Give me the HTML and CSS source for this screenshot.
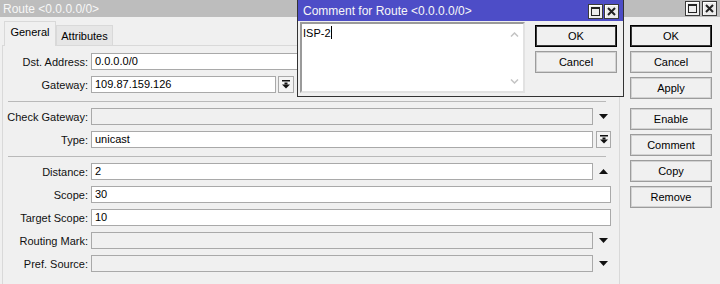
FILE: index.html
```html
<!DOCTYPE html>
<html>
<head>
    <title>Route &lt;0.0.0.0/0&gt;</title>
    <link rel="stylesheet" href="styles.css">
</head>
<body>
<div class="screen">

    <div class="window">
        <div class="titlebar">
            <span class="title">Route &lt;0.0.0.0/0&gt;</span>
            <div class="title-btns">
                <span class="tbtn"><svg width="9" height="9" viewBox="0 0 9 9"><rect x="0.5" y="0.5" width="8" height="8" fill="none" stroke="#222"/><rect x="0" y="0" width="9" height="2" fill="#222"/></svg></span>
                <span class="tbtn"><svg width="9" height="9" viewBox="0 0 9 9"><path d="M1 1 L8 8 M8 1 L1 8" stroke="#222" stroke-width="2"/></svg></span>
            </div>
        </div>

        <div class="window-body">
            <div class="tabs-area">
                <div class="tab-strip">
                    <div class="tab active">General</div>
                    <div class="tab">Attributes</div>
                </div>

                <div class="tab-panel">
                    <div class="row">
                        <label>Dst. Address:</label>
                        <div class="field">0.0.0.0/0</div>
                    </div>
                    <div class="row">
                        <label>Gateway:</label>
                        <div class="field gateway">109.87.159.126</div>
                        <div class="drop-btn gw-btn">
                            <svg width="8" height="9" viewBox="0 0 8 9"><rect x="0" y="0" width="8" height="1.5" fill="#111"/><rect x="2.5" y="2.5" width="3" height="2" fill="#111"/><path d="M0 4.5 L8 4.5 L4 8.5 Z" fill="#111"/></svg>
                        </div>
                    </div>

                    <div class="separator"></div>

                    <div class="row">
                        <label>Check Gateway:</label>
                        <div class="field disabled"></div>
                        <div class="arrow"><svg width="9" height="5" viewBox="0 0 9 5"><path d="M0 0 L9 0 L4.5 5 Z" fill="#111"/></svg></div>
                    </div>
                    <div class="row">
                        <label>Type:</label>
                        <div class="field">unicast</div>
                        <div class="drop-btn">
                            <svg width="8" height="9" viewBox="0 0 8 9"><rect x="0" y="0" width="8" height="1.5" fill="#111"/><rect x="2.5" y="2.5" width="3" height="2" fill="#111"/><path d="M0 4.5 L8 4.5 L4 8.5 Z" fill="#111"/></svg>
                        </div>
                    </div>

                    <div class="separator"></div>

                    <div class="row">
                        <label>Distance:</label>
                        <div class="field">2</div>
                        <div class="arrow"><svg width="9" height="5" viewBox="0 0 9 5"><path d="M0 5 L9 5 L4.5 0 Z" fill="#111"/></svg></div>
                    </div>
                    <div class="row">
                        <label>Scope:</label>
                        <div class="field">30</div>
                    </div>
                    <div class="row">
                        <label>Target Scope:</label>
                        <div class="field">10</div>
                    </div>
                    <div class="row">
                        <label>Routing Mark:</label>
                        <div class="field disabled"></div>
                        <div class="arrow"><svg width="9" height="5" viewBox="0 0 9 5"><path d="M0 0 L9 0 L4.5 5 Z" fill="#111"/></svg></div>
                    </div>
                    <div class="row">
                        <label>Pref. Source:</label>
                        <div class="field disabled"></div>
                        <div class="arrow"><svg width="9" height="5" viewBox="0 0 9 5"><path d="M0 0 L9 0 L4.5 5 Z" fill="#111"/></svg></div>
                    </div>
                </div>
            </div>

            <div class="side-buttons">
                <button class="btn default">OK</button>
                <button class="btn">Cancel</button>
                <button class="btn">Apply</button>
                <button class="btn group-start">Enable</button>
                <button class="btn">Comment</button>
                <button class="btn">Copy</button>
                <button class="btn">Remove</button>
            </div>
        </div>
    </div>

    <!-- comment dialog, floating over the route window -->
    <div class="dialog">
        <div class="dialog-titlebar">
            <span class="title">Comment for Route &lt;0.0.0.0/0&gt;</span>
            <div class="title-btns">
                <span class="tbtn"><svg width="9" height="9" viewBox="0 0 9 9"><rect x="0.5" y="0.5" width="8" height="8" fill="none" stroke="#222"/><rect x="0" y="0" width="9" height="2" fill="#222"/></svg></span>
                <span class="tbtn"><svg width="9" height="9" viewBox="0 0 9 9"><path d="M1 1 L8 8 M8 1 L1 8" stroke="#222" stroke-width="2"/></svg></span>
            </div>
        </div>
        <div class="dialog-body">
            <div class="memo">
                <div class="memo-text">ISP-2<span class="caret"></span></div>
                <div class="memo-scroll">
                    <svg width="9" height="5" viewBox="0 0 9 5"><path d="M1 4.5 L4.5 1 L8 4.5" fill="none" stroke="#c4c4c4" stroke-width="1.5"/></svg>
                    <svg width="9" height="5" viewBox="0 0 9 5"><path d="M1 0.5 L4.5 4 L8 0.5" fill="none" stroke="#c4c4c4" stroke-width="1.5"/></svg>
                </div>
            </div>
            <div class="dialog-buttons">
                <button class="btn default">OK</button>
                <button class="btn">Cancel</button>
            </div>
        </div>
    </div>

</div>
</body>
</html>
```

FILE: styles.css
```css
body {
    margin: 0;
    background-color: #f0f0f0;
    font-family: "Liberation Sans", Arial, sans-serif;
    font-size: 11px;
    color: #000;
}

.screen {
    position: relative;
    width: 720px;
    height: 284px;
    overflow: hidden;
}

.titlebar {
    height: 17px;
    box-sizing: border-box;
    background-color: #bdbdbd;
    display: flex;
    justify-content: space-between;
    align-items: center;
    padding: 0 3px;
}

.title {
    color: #f7f7f7;
    font-size: 12px;
}

.title-btns {
    display: flex;
    gap: 2px;
}

.tbtn {
    width: 15px;
    height: 15px;
    box-sizing: border-box;
    border: 1px solid #3a3a3a;
    background-color: #ececec;
    box-shadow: inset 1px 1px 0 #ffffff;
    display: flex;
    align-items: center;
    justify-content: center;
}

.window-body {
    display: flex;
    padding: 4px 0 0 2px;
}

.tabs-area {
    width: 618px;
}

.tab-strip {
    display: flex;
    align-items: flex-end;
    height: 24px;
    padding-left: 2px;
}

.tab {
    box-sizing: border-box;
    height: 20px;
    line-height: 20px;
    width: 57px;
    text-align: center;
    border: 1px solid #d9d9d9;
    border-bottom: none;
    background-color: #e6e6e6;
}

.tab.active {
    width: 52px;
    height: 25px;
    line-height: 21px;
    margin-bottom: -1px;
    background-color: #f0f0f0;
    z-index: 1;
}

.tab-panel {
    display: flex;
    flex-direction: column;
    height: 260px;
    box-sizing: border-box;
    border: 1px solid #d9d9d9;
    padding: 7px 8px 0 0;
}

.row {
    display: flex;
    align-items: center;
    height: 17px;
    flex: none;
    margin-bottom: 6px;
}

.row label {
    width: 85px;
    text-align: right;
    color: #111;
}

.field {
    flex: 1;
    height: 17px;
    box-sizing: border-box;
    margin-left: 3px;
    padding-left: 3px;
    line-height: 15px;
    background-color: #fff;
    border: 1px solid #a9a9a9;
}

.field.disabled {
    background-color: #f0f0f0;
}

.field.gateway {
    flex: none;
    width: 185px;
}

.drop-btn,
.arrow {
    width: 15px;
    height: 17px;
    box-sizing: border-box;
    margin-left: 3px;
    display: flex;
    align-items: center;
    justify-content: center;
}

.drop-btn {
    border: 1px solid #a9a9a9;
    background-color: #f4f4f4;
}

.drop-btn.gw-btn {
    margin-left: 2px;
    width: 16px;
}

.separator {
    flex: none;
    height: 1px;
    margin: 2px 5px 6px 5px;
    background-color: #b9b9b9;
}

.side-buttons {
    display: flex;
    flex-direction: column;
    gap: 4px;
    margin-left: 10px;
    padding-top: 4px;
}

.btn {
    width: 82px;
    height: 22px;
    box-sizing: border-box;
    padding: 0;
    font-family: "Liberation Sans", Arial, sans-serif;
    font-size: 11px;
    color: #000;
    background-color: #f0f0f0;
    border: 1px solid #9c9c9c;
    box-shadow: inset 0 0 0 1px #d2d2d2;
}

.btn.default {
    border: 1px solid #000;
    box-shadow: inset 0 0 0 1px #3a3a3a;
}

.btn.group-start {
    margin-top: 5px;
}

.dialog {
    position: absolute;
    left: 297px;
    top: 0;
    width: 327px;
    height: 97px;
    box-sizing: border-box;
    background-color: #f0f0f0;
    border: 1px solid #333;
    border-top: none;
}

.dialog-titlebar {
    height: 21px;
    box-sizing: border-box;
    background-color: #4d4dc7;
    display: flex;
    justify-content: space-between;
    align-items: center;
    padding: 1px 4px 0 5px;
}

.dialog-titlebar .title-btns {
    gap: 1px;
}

.dialog-body {
    display: flex;
    padding: 1px 5px 0 2px;
}

.memo {
    width: 225px;
    height: 71px;
    box-sizing: border-box;
    background-color: #fff;
    border: 2px solid;
    border-color: #9a9a9a #e2e2e2 #e2e2e2 #9a9a9a;
    display: flex;
}

.memo-text {
    flex: 1;
    padding: 2px 0 0 1px;
    line-height: 14px;
}

.caret {
    display: inline-block;
    width: 1px;
    height: 13px;
    background-color: #000;
    vertical-align: -2px;
}

.memo-scroll {
    width: 17px;
    display: flex;
    flex-direction: column;
    justify-content: space-between;
    align-items: center;
    padding: 8px 0 7px 0;
}

.dialog-buttons {
    display: flex;
    flex-direction: column;
    gap: 4px;
    margin-left: 10px;
    padding-top: 3px;
}
```
